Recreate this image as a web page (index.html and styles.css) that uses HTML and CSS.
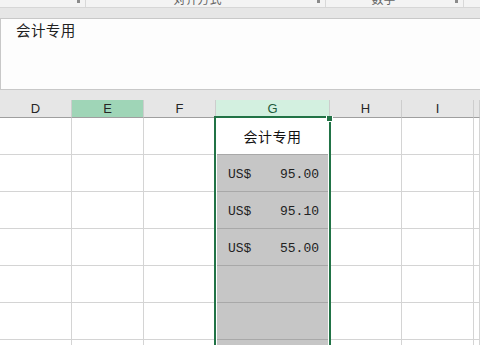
FILE: index.html
```html
<!DOCTYPE html>
<html lang="zh-CN">
<head>
    <meta charset="UTF-8">
    <title>会计专用</title>
    <link rel="stylesheet" href="styles.css">
</head>
<body>
    <div class="ribbon">
        <div class="group g1"><span class="launcher"></span></div>
        <div class="group g2"><span class="label">对齐方式</span><span class="launcher"></span></div>
        <div class="group g3"><span class="label">数字</span><span class="launcher"></span></div>
        <div class="group g4"></div>
    </div>
    <div class="band"></div>
    <div class="formula-bar">会计专用</div>
    <div class="band"></div>

    <div class="sheet">
        <div class="grid">
            <div class="hd">D</div>
            <div class="hd picked">E</div>
            <div class="hd">F</div>
            <div class="hd active">G</div>
            <div class="hd">H</div>
            <div class="hd">I</div>
            <div class="hd"></div>

            <div class="c"></div><div class="c"></div><div class="c"></div>
            <div class="c g first">会计专用</div>
            <div class="c"></div><div class="c"></div><div class="c"></div>

            <div class="c"></div><div class="c"></div><div class="c"></div>
            <div class="c g money"><span>US$</span><span>95.00</span></div>
            <div class="c"></div><div class="c"></div><div class="c"></div>

            <div class="c"></div><div class="c"></div><div class="c"></div>
            <div class="c g money"><span>US$</span><span>95.10</span></div>
            <div class="c"></div><div class="c"></div><div class="c"></div>

            <div class="c"></div><div class="c"></div><div class="c"></div>
            <div class="c g money"><span>US$</span><span>55.00</span></div>
            <div class="c"></div><div class="c"></div><div class="c"></div>

            <div class="c"></div><div class="c"></div><div class="c"></div>
            <div class="c g"></div>
            <div class="c"></div><div class="c"></div><div class="c"></div>

            <div class="c"></div><div class="c"></div><div class="c"></div>
            <div class="c g"></div>
            <div class="c"></div><div class="c"></div><div class="c"></div>

            <div class="c"></div><div class="c"></div><div class="c"></div>
            <div class="c g"></div>
            <div class="c"></div><div class="c"></div><div class="c"></div>
        </div>
        <div class="selection"><span class="handle"></span></div>
    </div>
</body>
</html>
```

FILE: styles.css
```css
body {
    margin: 0;
    width: 480px;
    height: 345px;
    overflow: hidden;
    background: #fff;
    font-family: "Liberation Sans", "Noto Sans CJK SC", sans-serif;
}

.ribbon {
    height: 7px;
    background: #f3f3f3;
    border-bottom: 1px solid #d6d6d6;
    display: grid;
    grid-template-columns: 86px 240px 138px 1fr;
    overflow: hidden;
}

.group {
    position: relative;
    border-right: 1px solid #d8d8d8;
    display: flex;
    justify-content: center;
}

.g2 {
    padding-right: 16px;
}

.g3 {
    padding-right: 22px;
}

.g4 {
    border-right: none;
}

.label {
    font-size: 12px;
    line-height: 12px;
    color: #666;
    margin-top: -7px;
    font-family: "Noto Sans CJK SC", sans-serif;
}

.launcher {
    position: absolute;
    right: 5px;
    top: 0;
    width: 3px;
    height: 3px;
    background: #8a8a8a;
}

.band {
    height: 10px;
    background: #e6e6e6;
}

.formula-bar {
    height: 72px;
    box-sizing: border-box;
    background: #fdfdfd;
    border-top: 1px solid #c8c8c8;
    border-bottom: 1px solid #c8c8c8;
    border-left: 1px solid #c8c8c8;
    padding: 1px 0 0 15px;
    font-family: "Noto Sans CJK SC", sans-serif;
    font-size: 14.5px;
    line-height: 20px;
    color: #222;
    letter-spacing: 0.4px;
}

.sheet {
    position: relative;
    height: 245px;
    overflow: hidden;
}

.grid {
    display: grid;
    grid-template-columns: 72px 72px 72px 114px 72px 72px 1fr;
    grid-template-rows: 18px repeat(7, 37px);
}

.hd {
    background: #e6e6e6;
    border-right: 1px solid #cdcdcd;
    border-bottom: 1px solid #9f9f9f;
    font-size: 13px;
    line-height: 18px;
    text-align: center;
    color: #262626;
}

.hd.picked {
    background: #9fd5b7;
}

.hd.active {
    background: #d3f0e0;
    color: #1f5c3c;
}

.c {
    border-right: 1px solid #d4d4d4;
    border-bottom: 1px solid #d4d4d4;
}

.c.g {
    background: #c6c6c6;
    border-bottom-color: #a8a8a8;
}

.c.first {
    background: #fff;
    font-family: "Noto Sans CJK SC", sans-serif;
    font-size: 14px;
    letter-spacing: 0.5px;
    color: #111;
    display: flex;
    justify-content: center;
    align-items: center;
}

.money {
    display: flex;
    justify-content: space-between;
    align-items: center;
    padding: 2px 10px 0 12px;
    font-family: "Liberation Mono", monospace;
    font-size: 13px;
    color: #222;
}

.selection {
    position: absolute;
    left: 214px;
    top: 16px;
    width: 117px;
    height: 260px;
    box-sizing: border-box;
    border: 2px solid #217346;
    box-shadow: inset 0 0 0 1px #fff;
    pointer-events: none;
}

.handle {
    position: absolute;
    right: -4px;
    top: -2px;
    width: 5px;
    height: 5px;
    background: #217346;
    border: 1px solid #fff;
    border-top: none;
}
```
